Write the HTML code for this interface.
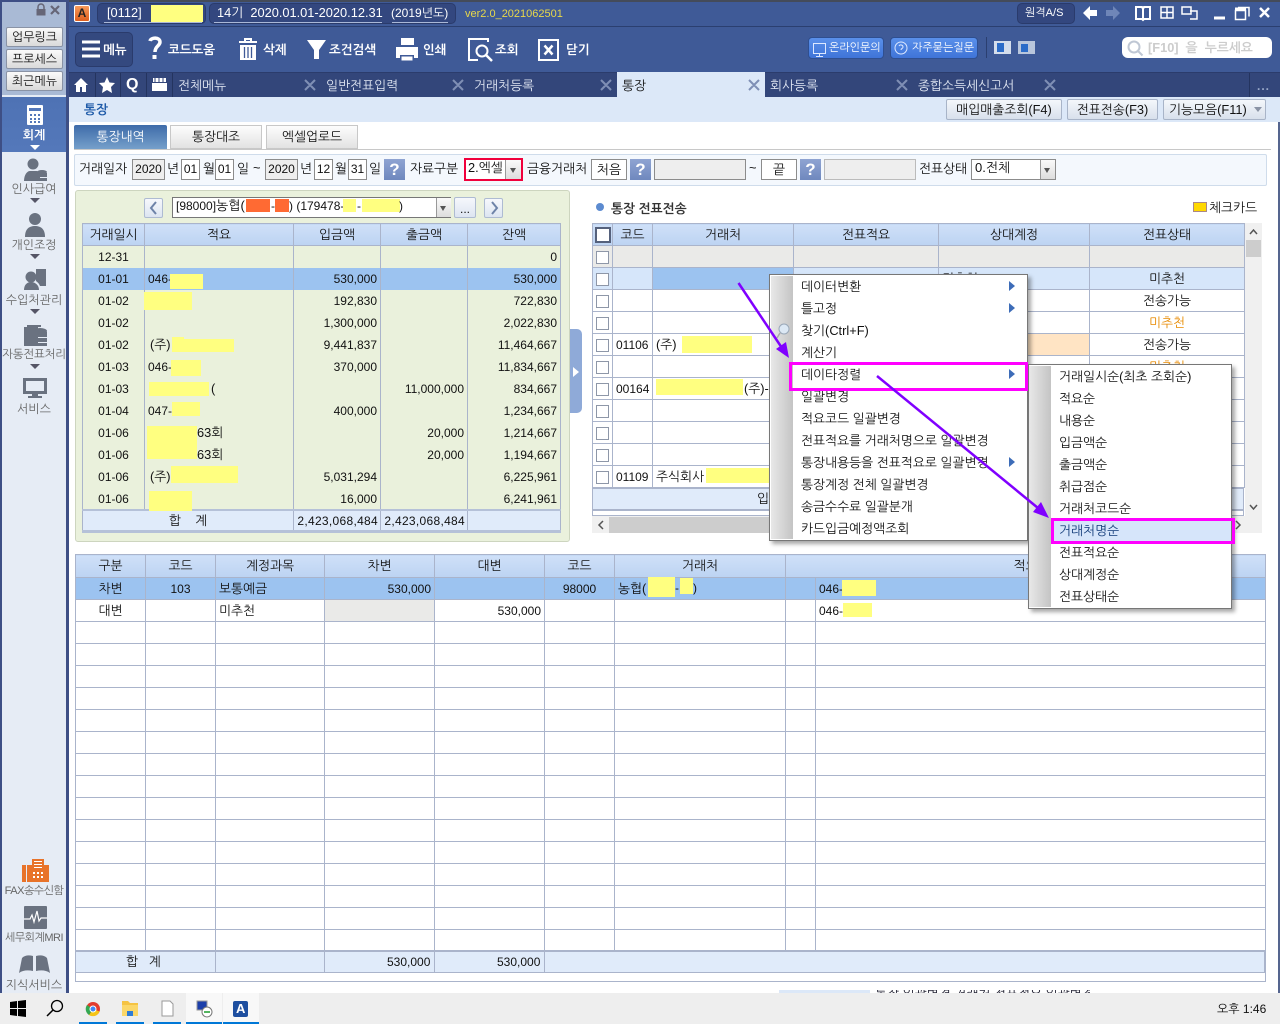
<!DOCTYPE html>
<html lang="ko"><head><meta charset="utf-8"><title>통장</title>
<style>
html,body{margin:0;padding:0;width:1280px;height:1024px;overflow:hidden;background:#fff}
body{position:relative;font-family:"Liberation Sans","NanumGothic","Noto Sans CJK KR",sans-serif;font-size:12.8px;color:#111}
.a{position:absolute}
.t{position:absolute;white-space:nowrap;line-height:14px;font-size:12.8px}
.w{color:#fff}.b{font-weight:bold}
.c{text-align:center}
.y{position:absolute;background:#FFFF80}
.o{position:absolute;background:#FF6A33}
svg{position:absolute;overflow:visible}
table{position:absolute;border-collapse:collapse;table-layout:fixed;font-size:12.8px}
td,th{padding:0 3px;height:22px;line-height:14px;font-weight:normal;white-space:nowrap;overflow:hidden;box-sizing:border-box;border:1px solid #AAB4CB}
th{background:linear-gradient(#CFE0F8,#BCD3F2);text-align:center;height:22px;padding:0}
.r{text-align:right;padding-right:3px;font-size:12px}.m{text-align:center}.n{font-size:12px}
#lt td{border-top:0;border-bottom:0;height:22px}
#lt tr.s td{background:#9CC3F0}
#lt tr.f td{background:#E0EBFA;border-top:2px solid #B5C1D8;border-bottom:3px solid #B5C1D8;height:22px;padding-top:1px}
.sel{background:#9CC3F0}.lb{background:#D6E6FA}.gy{background:#EAEAE8}
.cb{display:inline-block;width:11px;height:11px;border:1px solid #8E97A8;background:#fff;vertical-align:middle}
.box{position:absolute;box-sizing:border-box;border:1px solid #8c8c8c;background:#fff;height:21px;top:159px;line-height:19px;text-align:center;font-size:12px}
.gb{background:#EEE}
.q{position:absolute;top:159px;width:21px;height:21px;background:linear-gradient(#8FA4D2,#6F88BE);color:#fff;font-weight:bold;font-size:17px;line-height:21px;text-align:center;font-family:"Liberation Sans",sans-serif}
.sb{position:absolute;left:6px;width:57px;height:20px;box-sizing:border-box;border:1px solid #8a93a5;border-radius:2px;background:linear-gradient(#FAFAFA,#DADADA);text-align:center;line-height:18px;font-size:12px}
.sl{position:absolute;left:2px;width:64px;text-align:center;white-space:nowrap;color:#666;font-size:12px;line-height:14px}
.tri{position:absolute;left:30px;width:0;height:0;border-left:5px solid transparent;border-right:5px solid transparent;border-top:5px solid #556}
.mt{position:absolute;white-space:nowrap;line-height:14px;font-size:12.8px;margin-top:1px}
.ar{position:absolute;width:0;height:0;border-top:5px solid transparent;border-bottom:5px solid transparent;border-left:6px solid #3D6CB8}
.hb{position:absolute;top:99px;height:21px;box-sizing:border-box;border:1px solid #A8B4C8;border-radius:2px;background:linear-gradient(#F4F7FB,#D8E0EC);text-align:center;line-height:19px;font-size:12.8px}
.tb{position:absolute;top:79px;color:#E2E8F4;white-space:nowrap;line-height:14px;font-size:12.8px}
.tl{font-size:12.5px;top:43px}
</style></head><body>

<!-- top bar -->
<div class="a" style="left:69px;top:0;width:1211px;height:97px;background:#3F5A97"></div>
<div class="a" style="left:0;top:0;width:1280px;height:2px;background:#444B5A"></div>
<div class="a" style="left:69px;top:26px;width:1211px;height:1px;background:#2B3F70"></div>
<div class="a" style="left:74px;top:5px;width:16px;height:17px;background:linear-gradient(#F79A5A,#DD5E1E);border-radius:2px;box-sizing:border-box;border:1px solid #fff;color:#222;font-weight:bold;font-size:12px;line-height:15px;text-align:center">A</div>
<div class="a" style="left:97px;top:3px;width:109px;height:21px;background:#33477F;border:1px solid #2A3B6C;border-radius:5px;box-sizing:border-box"></div>
<div class="t w" style="left:107px;top:6px">[0112]</div>
<div class="a" style="left:104px;top:22px;width:98px;height:1px;background:#AAB8D8"></div>
<div class="y" style="left:151px;top:5px;width:52px;height:17px"></div>
<div class="a" style="left:209px;top:3px;width:247px;height:21px;background:#33477F;border:1px solid #2A3B6C;border-radius:5px;box-sizing:border-box"></div>
<div class="t w" style="left:217px;top:6px">14기&nbsp; 2020.01.01-2020.12.31</div>
<div class="t w" style="left:391px;top:6px;font-size:12px">(2019년도)</div>
<div class="a" style="left:214px;top:22px;width:168px;height:1px;background:#AAB8D8"></div>
<div class="a" style="left:392px;top:22px;width:56px;height:1px;background:#AAB8D8"></div>
<div class="t" style="left:465px;top:7px;color:#E8D84A;font-size:11px">ver2.0_2021062501</div>
<div class="a" style="left:1017px;top:3px;width:58px;height:21px;background:#33477F;border:1px solid #2A3B6C;border-radius:5px;box-sizing:border-box"></div>
<div class="t w" style="left:1025px;top:6px;font-size:11px">원격A/S</div>
<svg style="left:0;top:0" width="1280" height="27" fill="none">
<path d="M1083 13l7-7v4h7v6h-7v4z" fill="#fff"/><path d="M1120 13l-7-7v4h-7v6h7v4z" fill="#6F86B8"/>
<path d="M1136 7h6l1 2 1-2h6v12h-6l-1 1-1-1h-6zM1143 9v10" stroke="#fff" stroke-width="2"/>
<path d="M1161 7h12v11h-12zM1161 12.500h12M1167 7v11" stroke="#fff" stroke-width="1.500"/>
<path d="M1182 7h9v7h-9zM1190 11h7v8h-7" stroke="#fff" stroke-width="1.500"/>
<path d="M1214 18h11" stroke="#fff" stroke-width="3"/>
<path d="M1235.500 10.500h10v9h-10zM1238 7.500h11v9" stroke="#fff" stroke-width="1.500"/><path d="M1235 9h11" stroke="#fff" stroke-width="3"/>
<path d="M1260 8l9 9M1269 8l-9 9" stroke="#fff" stroke-width="2.500"/>
</svg>

<!-- toolbar -->
<div class="a" style="left:75px;top:32px;width:58px;height:35px;background:#34497F;border:1px solid #2A3B6C;border-radius:5px;box-sizing:border-box"></div>
<svg style="left:0;top:27px" width="640" height="45" fill="none">
<path d="M82 15h18M82 22h18M82 29h18" stroke="#fff" stroke-width="3"/>
<path d="M150 14c1-4 10-4 10 1 0 4-5 4-5 10" stroke="#fff" stroke-width="3.500"/><rect x="152.500" y="28" width="4" height="4" fill="#fff"/>
<path d="M239 15h18M245 15v-3h6v3" stroke="#fff" stroke-width="2"/><path d="M240 18h16v15h-16z" fill="#fff"/><path d="M244.500 20v11M248 20v11M251.500 20v11" stroke="#3F5A97" stroke-width="1.300"/>
<path d="M307 13h19l-7 10v9h-5v-9z" fill="#fff"/>
<path d="M401 11h13v7h-13z" fill="#fff"/><path d="M396 20h22v11h-4v-3h-14v3h-4z" fill="#fff"/><path d="M401 29h12v5h-12z" fill="#fff" stroke="#3F5A97"/>
<path d="M488 15v-3h-19v21h9" stroke="#fff" stroke-width="2"/><circle cx="482" cy="24" r="5.500" stroke="#fff" stroke-width="2"/><path d="M486 28l6 6" stroke="#fff" stroke-width="2.500"/>
<path d="M539 13h19v20h-19z" stroke="#fff" stroke-width="2"/><path d="M544.500 18.500l8 9M552.500 18.500l-8 9" stroke="#fff" stroke-width="2.500"/>
</svg>
<div class="t w b tl" style="left:103px">메뉴</div>
<div class="t w b tl" style="left:168px">코드도움</div>
<div class="t w b tl" style="left:263px">삭제</div>
<div class="t w b tl" style="left:329px">조건검색</div>
<div class="t w b tl" style="left:423px">인쇄</div>
<div class="t w b tl" style="left:495px">조회</div>
<div class="t w b tl" style="left:566px">닫기</div>
<div class="a" style="left:808px;top:37px;width:76px;height:22px;background:linear-gradient(#5A90EA,#3F74D8);border:1px solid #2F4F90;border-radius:4px;box-sizing:border-box"></div>
<div class="a" style="left:890px;top:37px;width:88px;height:22px;background:linear-gradient(#5A90EA,#3F74D8);border:1px solid #2F4F90;border-radius:4px;box-sizing:border-box"></div>
<div class="a" style="left:1122px;top:37px;width:150px;height:21px;background:#fff;border-radius:6px"></div>
<svg style="left:0;top:0" width="1280" height="72" fill="none">
<path d="M813.500 43.500h12v10h-12zM819.500 54v2M816 56.500h7" stroke="#DDE8FF"/>
<circle cx="901" cy="48" r="6" stroke="#DDE8FF"/><path d="M899 46c1-2 4-1 4 1s-2 1-2 3" stroke="#DDE8FF"/>
<circle cx="1134" cy="47" r="5.500" stroke="#BFC7D4" stroke-width="2"/><path d="M1138 51l4.500 4.500" stroke="#BFC7D4" stroke-width="2"/>
</svg>
<div class="t w" style="left:829px;top:41px;font-size:11px">온라인문의</div>
<div class="t w" style="left:912px;top:41px;font-size:11px">자주묻는질문</div>
<div class="a" style="left:986px;top:37px;width:1px;height:21px;background:#2B3F70"></div>
<div class="a" style="left:994px;top:41px;width:17px;height:13px;background:#D5DEEC"></div>
<div class="a" style="left:997px;top:43px;width:7px;height:9px;background:#2C6CC8"></div>
<div class="a" style="left:1018px;top:41px;width:17px;height:13px;background:#B9C6DC"></div>
<div class="a" style="left:1021px;top:44px;width:7px;height:8px;background:#2C6CC8"></div>
<div class="t b" style="left:1148px;top:41px;color:#CCC">[F10]&nbsp; 을&nbsp; 누르세요</div>

<!-- tab bar -->
<div class="a" style="left:69px;top:72px;width:1211px;height:25px;background:#33467A;border-top:1px solid #2B3C6C;box-sizing:border-box"></div>
<div class="a" style="left:617px;top:72px;width:148px;height:25px;background:#DCE8F8"></div>
<div class="a" style="left:95px;top:73px;width:1px;height:24px;background:#24345F"></div>
<div class="a" style="left:120px;top:73px;width:1px;height:24px;background:#24345F"></div>
<div class="a" style="left:146px;top:73px;width:1px;height:24px;background:#24345F"></div>
<div class="a" style="left:172px;top:73px;width:1px;height:24px;background:#24345F"></div>
<div class="a" style="left:1249px;top:73px;width:1px;height:24px;background:#24345F"></div>
<svg style="left:0;top:72px" width="180" height="25">
<path d="M74 13l7-7 7 7h-2v7h-4v-5h-2v5h-4v-7z" fill="#fff"/>
<path d="M107 5l2.500 5.500 5.500.5-4 4 1 6-5-3-5 3 1-6-4-4 5.500-.5z" fill="#fff"/>
<rect x="153" y="6" width="13" height="4" fill="#fff"/><rect x="152" y="11" width="15" height="8" fill="#fff"/>
<path d="M155 6v4M159 6v4M163 6v4" stroke="#33467A"/>
</svg>
<div class="t w b" style="left:126px;top:77px;font-size:16px;line-height:16px">Q</div>
<div class="tb" style="left:178px">전체메뉴</div>
<div class="tb" style="left:326px">일반전표입력</div>
<div class="tb" style="left:474px">거래처등록</div>
<div class="tb" style="left:622px;color:#111">통장</div>
<div class="tb" style="left:770px">회사등록</div>
<div class="tb" style="left:918px">종합소득세신고서</div>
<svg style="left:0;top:72px" width="1280" height="25" fill="none" stroke="#7F8FB5" stroke-width="2">
<path d="M305 8l10 10M315 8l-10 10M453 8l10 10M463 8l-10 10M601 8l10 10M611 8l-10 10M749 8l10 10M759 8l-10 10M897 8l10 10M907 8l-10 10M1045 8l10 10M1055 8l-10 10"/>
</svg>
<div class="t" style="left:1257px;top:79px;color:#9AA9C9;font-weight:bold;letter-spacing:1px;font-size:12px">...</div>

<!-- subheader -->
<div class="a" style="left:69px;top:97px;width:1211px;height:25px;background:#DCE8F8"></div>
<div class="t b" style="left:84px;top:103px;color:#1E5AA8">통장</div>
<div class="hb" style="left:946px;width:116px">매입매출조회(F4)</div>
<div class="hb" style="left:1067px;width:91px">전표전송(F3)</div>
<div class="hb" style="left:1163px;width:103px;text-align:left;padding-left:5px">기능모음(F11)</div>
<div class="a" style="left:1254px;top:107px;border-left:4px solid transparent;border-right:4px solid transparent;border-top:5px solid #8A93A5"></div>

<!-- tabs -->
<div class="a" style="left:74px;top:125px;width:93px;height:25px;background:linear-gradient(#3E6BA9,#78A2CC);color:#fff;text-align:center;line-height:24px;border-radius:2px 2px 0 0">통장내역</div>
<div class="a" style="left:170px;top:125px;width:92px;height:24px;box-sizing:border-box;border:1px solid #C8C8C8;background:linear-gradient(#FDFDFD,#E2E2E2);text-align:center;line-height:22px">통장대조</div>
<div class="a" style="left:266px;top:125px;width:92px;height:24px;box-sizing:border-box;border:1px solid #C8C8C8;background:linear-gradient(#FDFDFD,#E2E2E2);text-align:center;line-height:22px">엑셀업로드</div>
<div class="a" style="left:74px;top:149px;width:1197px;height:1px;background:#C8C8C8"></div>

<!-- filter bar -->
<div class="a" style="left:74px;top:154px;width:1193px;height:32px;background:#F4F8FD;border:1px solid #CFDCEB;border-radius:2px;box-sizing:border-box"></div>
<div class="t" style="left:79px;top:162px">거래일자</div>
<div class="box gb" style="left:132px;width:33px">2020</div><div class="t" style="left:167px;top:162px">년</div>
<div class="box" style="left:181px;width:19px">01</div><div class="t" style="left:203px;top:162px">월</div>
<div class="box" style="left:215px;width:19px">01</div><div class="t" style="left:237px;top:162px">일</div>
<div class="t" style="left:253px;top:161px">~</div>
<div class="box gb" style="left:265px;width:33px">2020</div><div class="t" style="left:300px;top:162px">년</div>
<div class="box" style="left:314px;width:19px">12</div><div class="t" style="left:335px;top:162px">월</div>
<div class="box" style="left:348px;width:19px">31</div><div class="t" style="left:369px;top:162px">일</div>
<div class="q" style="left:384px">?</div>
<div class="t" style="left:410px;top:162px">자료구분</div>
<div class="a" style="left:464px;top:158px;width:59px;height:23px;box-sizing:border-box;border:2px solid #F0003C;background:#fff"></div>
<div class="t" style="left:468px;top:161px">2.엑셀</div>
<div class="a" style="left:505px;top:160px;width:16px;height:19px;background:linear-gradient(#FAFAFA,#DDD);border-left:1px solid #999;box-sizing:border-box"></div>
<div class="a" style="left:510px;top:168px;border-left:3.500px solid transparent;border-right:3.500px solid transparent;border-top:5px solid #555"></div>
<div class="t" style="left:527px;top:162px">금융거래처</div>
<div class="box" style="left:591px;width:36px;font-size:13px">처음</div>
<div class="q" style="left:630px">?</div>
<div class="box gb" style="left:654px;width:92px"></div>
<div class="t" style="left:749px;top:161px">~</div>
<div class="box" style="left:761px;width:36px;font-size:13px">끝</div>
<div class="q" style="left:800px">?</div>
<div class="box gb" style="left:824px;width:92px;border-color:#bbb"></div>
<div class="t" style="left:919px;top:162px">전표상태</div>
<div class="box" style="left:971px;width:85px;text-align:left;padding-left:3px;line-height:16px;font-size:13px">0.전체</div>
<div class="a" style="left:1040px;top:160px;width:15px;height:19px;background:linear-gradient(#FAFAFA,#DDD);border-left:1px solid #999;box-sizing:border-box"></div>
<div class="a" style="left:1044px;top:168px;border-left:3.500px solid transparent;border-right:3.500px solid transparent;border-top:5px solid #555"></div>

<!-- left panel -->
<div class="a" style="left:75px;top:190px;width:495px;height:352px;background:#EAF1DC;border:1px solid #CDD5BF;border-radius:3px;box-sizing:border-box"></div>
<div class="a" style="left:144px;top:198px;width:19px;height:20px;box-sizing:border-box;border:1px solid #AEBBD2;border-radius:2px;background:linear-gradient(#F6F8FC,#DDE5F1)"></div>
<div class="a" style="left:484px;top:198px;width:19px;height:20px;box-sizing:border-box;border:1px solid #AEBBD2;border-radius:2px;background:linear-gradient(#F6F8FC,#DDE5F1)"></div>
<svg style="left:0;top:190px" width="520" height="40" fill="none" stroke="#6E83A8" stroke-width="2"><path d="M156 12l-5 6 5 6M492 12l5 6-5 6"/></svg>
<div class="a" style="left:172px;top:197px;width:279px;height:21px;background:#fff;border:1px solid #777;box-sizing:border-box"></div>
<div class="t" style="left:176px;top:199px;font-size:12px">[98000]<span style="font-size:13px">농협(</span></div>
<div class="o" style="left:246px;top:199px;width:24px;height:13px"></div>
<div class="t" style="left:271px;top:199px;font-size:12px">-</div>
<div class="o" style="left:275px;top:199px;width:14px;height:13px"></div>
<div class="t" style="left:289px;top:199px;font-size:12px">) (179478-</div>
<div class="y" style="left:343px;top:199px;width:13px;height:13px"></div>
<div class="t" style="left:357px;top:199px;font-size:12px">-</div>
<div class="y" style="left:362px;top:199px;width:38px;height:13px"></div>
<div class="t" style="left:399px;top:199px;font-size:12px">)</div>
<div class="a" style="left:436px;top:198px;width:15px;height:19px;background:linear-gradient(#FAFAFA,#DDD);border-left:1px solid #999;box-sizing:border-box"></div>
<div class="a" style="left:440px;top:206px;border-left:3.500px solid transparent;border-right:3.500px solid transparent;border-top:5px solid #555"></div>
<div class="a" style="left:454px;top:197px;width:22px;height:21px;box-sizing:border-box;border:1px solid #AEBBD2;border-radius:2px;background:linear-gradient(#F6F8FC,#DDE5F1);text-align:center;line-height:22px;font-size:12px">...</div>

<table id="lt" style="left:82px;top:223px;width:478px;background:#EAF1DC;border:1px solid #AAB4CB">
<colgroup><col style="width:62px"><col style="width:149px"><col style="width:87px"><col style="width:87px"><col style="width:93px"></colgroup>
<tr><th>거래일시</th><th>적요</th><th>입금액</th><th>출금액</th><th>잔액</th></tr>
<tr><td class="m n">12-31</td><td></td><td></td><td></td><td class="r">0</td></tr>
<tr class="s"><td class="m n">01-01</td><td class="n">046-</td><td class="r">530,000</td><td></td><td class="r">530,000</td></tr>
<tr><td class="m n">01-02</td><td></td><td class="r">192,830</td><td></td><td class="r">722,830</td></tr>
<tr><td class="m n">01-02</td><td></td><td class="r">1,300,000</td><td></td><td class="r">2,022,830</td></tr>
<tr><td class="m n">01-02</td><td style="padding-left:5px">(주)</td><td class="r">9,441,837</td><td></td><td class="r">11,464,667</td></tr>
<tr><td class="m n">01-03</td><td class="n">046-</td><td class="r">370,000</td><td></td><td class="r">11,834,667</td></tr>
<tr><td class="m n">01-03</td><td style="padding-left:66px">(</td><td></td><td class="r">11,000,000</td><td class="r">834,667</td></tr>
<tr><td class="m n">01-04</td><td class="n">047-</td><td class="r">400,000</td><td></td><td class="r">1,234,667</td></tr>
<tr><td class="m n">01-06</td><td style="padding-left:52px">63회</td><td></td><td class="r">20,000</td><td class="r">1,214,667</td></tr>
<tr><td class="m n">01-06</td><td style="padding-left:52px">63회</td><td></td><td class="r">20,000</td><td class="r">1,194,667</td></tr>
<tr><td class="m n">01-06</td><td style="padding-left:5px">(주)</td><td class="r">5,031,294</td><td></td><td class="r">6,225,961</td></tr>
<tr><td class="m n" style="padding-top:2px">01-06</td><td></td><td class="r" style="padding-top:2px">16,000</td><td></td><td class="r" style="padding-top:2px">6,241,961</td></tr>
<tr class="f"><td colspan="2" class="m">합 &nbsp;&nbsp;&nbsp;계</td><td class="r" style="letter-spacing:.3px;padding-right:2px">2,423,068,484</td><td class="r" style="letter-spacing:.3px;padding-right:2px">2,423,068,484</td><td></td></tr>
</table>
<div class="y" style="left:170px;top:274px;width:33px;height:15px"></div>
<div class="y" style="left:144px;top:292px;width:48px;height:18px"></div>
<div class="y" style="left:172px;top:339px;width:62px;height:13px"></div>
<div class="y" style="left:172px;top:337px;width:12px;height:2px"></div>
<div class="y" style="left:171px;top:360px;width:30px;height:16px"></div>
<div class="y" style="left:149px;top:382px;width:60px;height:14px"></div>
<div class="y" style="left:172px;top:402px;width:28px;height:14px"></div>
<div class="y" style="left:147px;top:426px;width:50px;height:33px"></div>
<div class="y" style="left:171px;top:466px;width:67px;height:17px"></div>
<div class="y" style="left:149px;top:491px;width:43px;height:20px"></div>

<!-- collapse handle -->
<div class="a" style="left:570px;top:329px;width:12px;height:84px;background:#8FAAD8;border-radius:0 5px 5px 0"></div>
<div class="a" style="left:573px;top:367px;border-top:5px solid transparent;border-bottom:5px solid transparent;border-left:6px solid #fff"></div>

<!-- right panel -->
<div class="a" style="left:596px;top:203px;width:8px;height:8px;border-radius:50%;background:#5C8BD0"></div>
<div class="t b" style="left:611px;top:202px;color:#333">통장 전표전송</div>
<div class="a" style="left:1193px;top:202px;width:14px;height:10px;background:#FFD800;border:1px solid #A88;box-sizing:border-box"></div>
<div class="t" style="left:1209px;top:201px">체크카드</div>

<table style="left:592px;top:223px;width:652px;background:#fff">
<colgroup><col style="width:20px"><col style="width:40px"><col style="width:141px"><col style="width:145px"><col style="width:151px"><col style="width:155px"></colgroup>
<tr><th style="padding:0"><span class="cb" style="width:12px;height:12px;border:2px solid #55617C"></span></th><th>코드</th><th>거래처</th><th>전표적요</th><th>상대계정</th><th>전표상태</th></tr>
<tr class="gy"><td class="m" style="padding:0"><span class="cb"></span></td><td></td><td></td><td></td><td></td><td></td></tr>
<tr class="lb"><td class="m" style="padding:0"><span class="cb"></span></td><td></td><td class="sel"></td><td></td><td>미추천</td><td class="m">미추천</td></tr>
<tr><td class="m" style="padding:0"><span class="cb"></span></td><td></td><td></td><td></td><td></td><td class="m">전송가능</td></tr>
<tr><td class="m" style="padding:0"><span class="cb"></span></td><td></td><td></td><td></td><td></td><td class="m" style="color:#E88A00">미추천</td></tr>
<tr><td class="m" style="padding:0"><span class="cb"></span></td><td class="n">01106</td><td>(주)</td><td></td><td style="background:#FFE4C4"></td><td class="m">전송가능</td></tr>
<tr><td class="m" style="padding:0"><span class="cb"></span></td><td></td><td></td><td></td><td></td><td class="m" style="color:#E88A00">미추천</td></tr>
<tr><td class="m" style="padding:0"><span class="cb"></span></td><td class="n">00164</td><td style="padding-left:91px">(주)-</td><td></td><td></td><td></td></tr>
<tr><td class="m" style="padding:0"><span class="cb"></span></td><td></td><td></td><td></td><td></td><td></td></tr>
<tr><td class="m" style="padding:0"><span class="cb"></span></td><td></td><td></td><td></td><td></td><td></td></tr>
<tr><td class="m" style="padding:0"><span class="cb"></span></td><td></td><td></td><td></td><td></td><td></td></tr>
<tr><td class="m" style="padding:0"><span class="cb"></span></td><td class="n">01109</td><td>주식회사</td><td></td><td></td><td></td></tr>
</table>
<div class="a" style="left:592px;top:488px;width:652px;height:22px;background:#E0EBFA;border:1px solid #AAB4CB;box-sizing:border-box"></div>
<div class="t" style="left:757px;top:492px">입</div>
<div class="a" style="left:592px;top:510px;width:652px;height:6px;background:#fff;border:1px solid #AAB4CB;box-sizing:border-box"></div>
<div class="y" style="left:682px;top:336px;width:70px;height:17px"></div>
<div class="y" style="left:656px;top:379px;width:87px;height:16px"></div>
<div class="y" style="left:706px;top:468px;width:66px;height:15px"></div>
<!-- scrollbars -->
<div class="a" style="left:1245px;top:223px;width:17px;height:310px;background:#F0F0F0"></div>
<div class="a" style="left:1246px;top:240px;width:15px;height:17px;background:#CDCDCD"></div>
<div class="a" style="left:592px;top:516px;width:670px;height:17px;background:#F0F0F0"></div>
<div class="a" style="left:609px;top:517px;width:170px;height:16px;background:#CDCDCD"></div>
<svg style="left:0;top:0" width="1280" height="540" fill="none" stroke="#555" stroke-width="1.500">
<path d="M1250 234l3.500-4 3.500 4M1250 505l3.500 4 3.500-4M603 521l-4 4 4 4M1236 521l4 4-4 4"/>
</svg>

<!-- bottom grid -->
<div class="a" style="left:75px;top:554px;width:1191px;height:428px;border:1px solid #AAB4CB;box-sizing:border-box"></div>
<table style="left:75px;top:554px;width:1190px;background:#fff">
<colgroup><col style="width:70px"><col style="width:70px"><col style="width:109px"><col style="width:110px"><col style="width:110px"><col style="width:70px"><col style="width:171px"><col style="width:30px"><col style="width:450px"></colgroup>
<tr><th style="height:23px">구분</th><th>코드</th><th>계정과목</th><th>차변</th><th>대변</th><th>코드</th><th>거래처</th><th colspan="2">적요</th></tr>
<tr class="sel"><td class="m">차변</td><td class="m n">103</td><td>보통예금</td><td class="r">530,000</td><td></td><td class="m n">98000</td><td>농협(</td><td></td><td class="n">046-</td></tr>
<tr><td class="m">대변</td><td></td><td>미추천</td><td style="background:#EAEAE8"></td><td class="r">530,000</td><td></td><td></td><td></td><td class="n">046-</td></tr>
<tr><td></td><td></td><td></td><td></td><td></td><td></td><td></td><td></td><td></td></tr>
<tr><td></td><td></td><td></td><td></td><td></td><td></td><td></td><td></td><td></td></tr>
<tr><td></td><td></td><td></td><td></td><td></td><td></td><td></td><td></td><td></td></tr>
<tr><td></td><td></td><td></td><td></td><td></td><td></td><td></td><td></td><td></td></tr>
<tr><td></td><td></td><td></td><td></td><td></td><td></td><td></td><td></td><td></td></tr>
<tr><td></td><td></td><td></td><td></td><td></td><td></td><td></td><td></td><td></td></tr>
<tr><td></td><td></td><td></td><td></td><td></td><td></td><td></td><td></td><td></td></tr>
<tr><td></td><td></td><td></td><td></td><td></td><td></td><td></td><td></td><td></td></tr>
<tr><td></td><td></td><td></td><td></td><td></td><td></td><td></td><td></td><td></td></tr>
<tr><td></td><td></td><td></td><td></td><td></td><td></td><td></td><td></td><td></td></tr>
<tr><td></td><td></td><td></td><td></td><td></td><td></td><td></td><td></td><td></td></tr>
<tr><td></td><td></td><td></td><td></td><td></td><td></td><td></td><td></td><td></td></tr>
<tr><td></td><td></td><td></td><td></td><td></td><td></td><td></td><td></td><td></td></tr>
<tr><td></td><td></td><td></td><td></td><td></td><td></td><td></td><td></td><td></td></tr>
<tr><td></td><td></td><td></td><td></td><td></td><td></td><td></td><td></td><td></td></tr>
</table>
<div class="a" style="left:75px;top:950px;width:1190px;height:23px;background:#E0EBFA;border:1px solid #AAB4CB;border-top:2px solid #AAB4CB;box-sizing:border-box"></div>
<div class="a" style="left:215px;top:951px;width:1px;height:21px;background:#AAB4CB"></div>
<div class="a" style="left:324px;top:951px;width:1px;height:21px;background:#AAB4CB"></div>
<div class="a" style="left:434px;top:951px;width:1px;height:21px;background:#AAB4CB"></div>
<div class="a" style="left:544px;top:951px;width:1px;height:21px;background:#AAB4CB"></div>
<div class="t" style="left:126px;top:955px">합 &nbsp;&nbsp;계</div>
<div class="t" style="left:387px;top:955px;font-size:12px">530,000</div>
<div class="t" style="left:497px;top:955px;font-size:12px">530,000</div>
<div class="y" style="left:648px;top:577px;width:27px;height:20px"></div>
<div class="t" style="left:675px;top:581px;font-size:12px">-</div>
<div class="y" style="left:680px;top:578px;width:13px;height:16px"></div>
<div class="t" style="left:693px;top:581px;font-size:12px">)</div>
<div class="y" style="left:842px;top:580px;width:34px;height:16px"></div>
<div class="y" style="left:843px;top:603px;width:29px;height:14px"></div>
<div class="a" style="left:779px;top:990px;width:91px;height:3px;background:#DCE8F8"></div>
<div class="a" style="left:875px;top:990px;width:215px;height:3px;overflow:hidden"><div class="t" style="left:0;top:-3px;color:#223">통장 일괄변경 거래처 전표적요 일괄변경 거래처명으로 일괄</div></div>
<div class="a" style="left:1278px;top:122px;width:2px;height:871px;background:#55658F"></div>

<!-- context menu 1 -->
<div class="a" style="left:769px;top:274px;width:259px;height:267px;background:#fff;border:1px solid #777;box-sizing:border-box;box-shadow:3px 3px 4px rgba(0,0,0,.35)"></div>
<div class="a" style="left:771px;top:276px;width:22px;height:263px;background:linear-gradient(90deg,#E8E8E8,#C4C4C4)"></div>
<div class="mt" style="left:801px;top:279px">데이터변환</div><div class="ar" style="left:1009px;top:281px"></div>
<div class="mt" style="left:801px;top:301px">틀고정</div><div class="ar" style="left:1009px;top:303px"></div>
<div class="mt" style="left:801px;top:323px">찾기(Ctrl+F)</div>
<svg style="left:776px;top:322px" width="16" height="18" fill="none"><circle cx="8" cy="7" r="5" fill="#DCE8F4" stroke="#9AA8B8"/><path d="M4 11l-3 5" stroke="#AAA" stroke-width="1.500"/></svg>
<div class="mt" style="left:801px;top:345px">계산기</div>
<div class="mt" style="left:801px;top:367px">데이타정렬</div><div class="ar" style="left:1009px;top:369px"></div>
<div class="mt" style="left:801px;top:389px">일괄변경</div>
<div class="mt" style="left:801px;top:411px">적요코드 일괄변경</div>
<div class="mt" style="left:801px;top:433px">전표적요를 거래처명으로 일괄변경</div>
<div class="mt" style="left:801px;top:455px">통장내용등을 전표적요로 일괄변경</div><div class="ar" style="left:1009px;top:457px"></div>
<div class="mt" style="left:801px;top:477px">통장계정 전체 일괄변경</div>
<div class="mt" style="left:801px;top:499px">송금수수료 일괄분개</div>
<div class="mt" style="left:801px;top:521px">카드입금예정액조회</div>
<div class="a" style="left:789px;top:362px;width:239px;height:29px;border:3px solid #FF00FF;box-sizing:border-box"></div>

<!-- context menu 2 -->
<div class="a" style="left:1028px;top:364px;width:204px;height:245px;background:#fff;border:1px solid #777;box-sizing:border-box;box-shadow:3px 3px 4px rgba(0,0,0,.35)"></div>
<div class="a" style="left:1029px;top:366px;width:22px;height:241px;background:linear-gradient(90deg,#E8E8E8,#C4C4C4)"></div>
<div class="a" style="left:1053px;top:520px;width:178px;height:22px;background:#D6E5FA"></div>
<div class="mt" style="left:1059px;top:369px">거래일시순(최초 조회순)</div>
<div class="mt" style="left:1059px;top:391px">적요순</div>
<div class="mt" style="left:1059px;top:413px">내용순</div>
<div class="mt" style="left:1059px;top:435px">입금액순</div>
<div class="mt" style="left:1059px;top:457px">출금액순</div>
<div class="mt" style="left:1059px;top:479px">취급점순</div>
<div class="mt" style="left:1059px;top:501px">거래처코드순</div>
<div class="mt" style="left:1059px;top:523px;color:#103A78">거래처명순</div>
<div class="mt" style="left:1059px;top:545px">전표적요순</div>
<div class="mt" style="left:1059px;top:567px">상대계정순</div>
<div class="mt" style="left:1059px;top:589px">전표상태순</div>
<div class="a" style="left:1051px;top:518px;width:184px;height:26px;border:3px solid #FF00FF;box-sizing:border-box"></div>

<!-- arrows -->
<svg style="left:0;top:0" width="1280" height="1024" fill="none">
<path d="M738.500 283L782 348" stroke="#8000FF" stroke-width="2.500"/><path d="M789 358l-13-9 10-7z" fill="#8000FF"/>
<path d="M877 376L1038 508" stroke="#8000FF" stroke-width="2.500"/><path d="M1049 518l-16-6 8-10z" fill="#8000FF"/>
</svg>

<!-- sidebar -->
<div class="a" style="left:0;top:0;width:69px;height:993px;background:#3E4F85"></div>
<div class="a" style="left:2px;top:2px;width:64px;height:991px;background:#E6ECF5"></div>
<div class="a" style="left:2px;top:2px;width:64px;height:93px;background:#A9BAD5"></div>
<svg style="left:0;top:0" width="69" height="20" fill="none">
<path d="M38 9V7a2.800 2.800 0 0 1 6 0v2" stroke="#667" stroke-width="1.500"/><rect x="36.500" y="9" width="9" height="6.500" fill="#667"/>
<path d="M51 6l8 8M59 6l-8 8" stroke="#667" stroke-width="2.200"/>
</svg>
<div class="sb" style="top:27px">업무링크</div>
<div class="sb" style="top:49px">프로세스</div>
<div class="sb" style="top:71px">최근메뉴</div>
<div class="a" style="left:2px;top:97px;width:64px;height:55px;background:linear-gradient(#4E72B4,#5478BA)"></div>
<svg style="left:0;top:90px" width="69" height="330">
<rect x="27" y="15" width="16" height="20" rx="1" fill="#fff"/><rect x="29" y="18" width="12" height="3" fill="#5478BA"/>
<path d="M30 24h2v2h-2zM34 24h2v2h-2zM38 24h2v2h-2zM30 28h2v2h-2zM34 28h2v2h-2zM38 28h2v2h-2zM30 31h2v2h-2zM34 31h2v2h-2zM38 31h2v2h-2z" fill="#5478BA"/>
<g fill="#6A7280">
<circle cx="33" cy="74" r="5.500"/><path d="M24 91c0-6 3-10 6-10h6c2 0 4 1 4 3v7z"/><ellipse cx="42" cy="82" rx="5" ry="2"/><path d="M37 83h10v4H37zM37 88h10v3H37z"/>
<circle cx="35" cy="129" r="6"/><path d="M25 147c0-8 4-11 10-11s10 3 10 11z"/>
<circle cx="31" cy="187" r="5.500"/><path d="M24 200c0-5 3-8 7-8s8 3 8 8z"/><path d="M36 179h10v17h-6c-1-3-3-4-4-5z"/>
<path d="M24 237h14v19H24z"/><path d="M27 235h14v2H27z"/><ellipse cx="40" cy="241" rx="7" ry="3"/><path d="M33 242h14v5H33zM33 248h14v4H33zM33 253h14v3H33z"/>
<path d="M23 288h24v16H23z"/><path d="M32 304h6v3h-6zM28 306h14v2H28z"/>
</g>
<rect x="26" y="291" width="18" height="10" fill="#E6ECF5"/>
</svg>
<div class="sl b" style="top:128px;color:#fff">회계</div>
<div class="tri" style="top:145px;border-top-color:#fff"></div>
<div class="sl" style="top:182px">인사급여</div><div class="tri" style="top:198px"></div>
<div class="sl" style="top:238px">개인조정</div><div class="tri" style="top:254px"></div>
<div class="sl" style="top:293px">수입처관리</div><div class="tri" style="top:309px"></div>
<div class="sl" style="top:348px;font-size:11.500px;letter-spacing:-.2px">자동전표처리</div><div class="tri" style="top:364px"></div>
<div class="sl" style="top:402px">서비스</div>
<svg style="left:0;top:850px" width="69" height="140">
<path d="M22 15h4v17h-4zM27 15h5V9h12v6h5v17H27z" fill="#E8732A"/><path d="M34 11h8v1h-8zM34 14h8v1h-8zM34 17h8v1h-8z" fill="#fff"/>
<path d="M33 22h2v2h-2zM37 22h2v2h-2zM41 22h2v2h-2zM33 26h2v2h-2zM37 26h2v2h-2zM41 26h2v2h-2z" fill="#fff"/>
<rect x="24" y="56" width="23" height="23" rx="1" fill="#6A7280"/>
<path d="M24 69h6l2-4 2 7 3-11 2 10 2-3h6" fill="none" stroke="#fff" stroke-width="1.200"/>
<path d="M22 108c3-3 7-3 11-2v15c-5-1-10-1-14 2zM36 106c4-1 8-1 11 2l3 15c-4-3-9-3-14-2z" fill="#6A7280"/>
</svg>
<div class="sl" style="top:884px;font-size:11px;letter-spacing:-.5px">FAX송수신함</div>
<div class="sl" style="top:931px;font-size:11px;letter-spacing:-.5px">세무회계MRI</div>
<div class="sl" style="top:978px">지식서비스</div>

<!-- taskbar -->
<div class="a" style="left:0;top:993px;width:1280px;height:31px;background:#EEEEEE"></div>
<div class="a" style="left:186px;top:993px;width:36px;height:31px;background:#F8F8F8"></div>
<div class="a" style="left:223px;top:993px;width:36px;height:31px;background:#F8F8F8"></div>
<div class="a" style="left:79px;top:1022px;width:28px;height:2px;background:#0078D7"></div>
<div class="a" style="left:116px;top:1022px;width:28px;height:2px;background:#0078D7"></div>
<div class="a" style="left:153px;top:1022px;width:28px;height:2px;background:#0078D7"></div>
<div class="a" style="left:186px;top:1022px;width:36px;height:2px;background:#0078D7"></div>
<div class="a" style="left:223px;top:1022px;width:36px;height:2px;background:#0078D7"></div>
<svg style="left:0;top:993px" width="280" height="31" fill="none">
<path d="M10 9l7-1v7h-7zM18 8l8-1v8h-8zM10 16h7v7l-7-1zM18 16h8v8l-8-1z" fill="#000"/>
<circle cx="57" cy="13" r="5.500" stroke="#000" stroke-width="1.300"/><path d="M53 17l-6 6" stroke="#000" stroke-width="1.500"/>
<circle cx="93" cy="16" r="7" fill="#E33B2E"/><path d="M93 16l6.500 2.500A7 7 0 0 1 89 22z" fill="#F5C518"/><path d="M93 16l-4 6A7 7 0 0 1 87 12z" fill="#34A853"/><circle cx="93" cy="16" r="3" fill="#4285F4" stroke="#fff"/>
<path d="M122 8h6l2 2h8v13h-16z" fill="#F5C342"/><path d="M122 12h16v11h-16z" fill="#FBD768"/><path d="M127 18h6v5h-6z" fill="#2E7CD6"/>
<path d="M162 8h8l3 3v12h-11z" fill="#fff" stroke="#9A9A9A"/>
<rect x="197" y="8" width="10" height="9" fill="#1C3FAA" stroke="#999"/><circle cx="207" cy="19" r="5" fill="#fff" stroke="#777"/><path d="M204 19h6" stroke="#1A9A2A" stroke-width="1.500"/>
<rect x="233" y="8" width="15" height="16" rx="2" fill="#1E4FA0"/>
</svg>
<div class="t w b" style="left:236px;top:1002px;font-size:13px">A</div>
<div class="t" style="left:1217px;top:1002px;font-size:12px">오후 1:46</div>

</body></html>
